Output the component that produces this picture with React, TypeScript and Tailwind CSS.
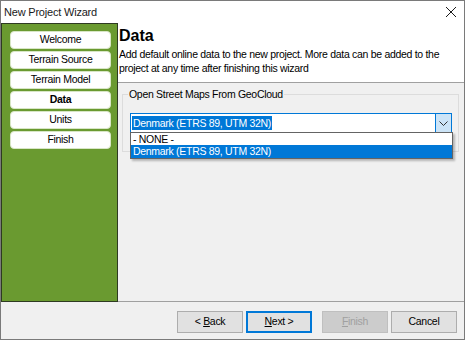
const steps = ["Welcome", "Terrain Source", "Terrain Model", "Data", "Units", "Finish"];
const current = "Data";

function WizardButton({
  label,
  hotkey,
  primary,
  disabled,
}: {
  label: [string, string, string];
  hotkey?: boolean;
  primary?: boolean;
  disabled?: boolean;
}) {
  const [before, key, after] = label;
  return (
    <div
      className={
        "w-[66px] h-[22px] flex items-center justify-center border " +
        (disabled
          ? "bg-[#cccccc] border-[#bfbfbf] text-[#a0a0a0]"
          : primary
          ? "bg-[#e1e1e1] border-[#0078d7] text-black shadow-[inset_0_0_0_1px_#0078d7]"
          : "bg-[#e1e1e1] border-[#adadad] text-black")
      }
    >
      <span>
        {before}
        <span className={hotkey ? "underline underline-offset-1" : ""}>{key}</span>
        {after}
      </span>
    </div>
  );
}

export default function App() {
  return (
    <div className="w-[465px] h-[340px] bg-[#f0f0f0] border border-[#7a7a7a] flex flex-col text-[10.5px] tracking-[-0.3px] text-black font-['Liberation_Sans',Arial,sans-serif] select-none">
      {/* title bar */}
      <div className="h-[22px] bg-white flex items-center justify-between pl-[3px] pr-[6px] shrink-0">
        <span className="text-[11px] tracking-[-0.2px] text-[#1a1a1a]">New Project Wizard</span>
        <svg width="12" height="12" viewBox="0 0 12 12" className="mr-[1px]">
          <path d="M1 1 L11 11 M11 1 L1 11" stroke="#1a1a1a" strokeWidth="1" />
        </svg>
      </div>

      {/* body */}
      <div className="flex h-[279px] shrink-0">
        <div className="w-[117px] bg-[#6a9a30] border border-[#2e3a22] flex flex-col gap-[2px] pt-[7px] pl-[8px] pr-[6px]">
          {steps.map((s) => (
            <div
              key={s}
              className={
                "h-[18px] bg-white rounded-[4px] border border-[#d8e6c6] flex items-center justify-center " +
                (s === current ? "font-bold" : "")
              }
            >
              {s}
            </div>
          ))}
        </div>

        <div className="flex-1 flex flex-col border-b border-[#a0a0a0]">
          <div className="h-[60px] bg-white border-b border-[#a0a0a0] pl-[1px] pt-[2px]">
            <div className="text-[16px] font-bold tracking-normal leading-[22px]">Data</div>
            <div className="leading-[14px] pr-[18px]">
              Add default online data to the new project. More data can be added to the project at any time after
              finishing this wizard
            </div>
          </div>

          <div className="px-[4px] pt-[5px]">
            <div className="relative border border-[#dcdcdc] h-[58px] mt-[6px] mr-[1px]">
              <span className="absolute -top-[8px] left-[5px] bg-[#f0f0f0] px-[1px] leading-[14px]">
                Open Street Maps From GeoCloud
              </span>

              <div className="relative mt-[18px] ml-[7px] mr-[6px] h-[20px] bg-white border border-[#0078d7] flex items-center">
                <span className="ml-[1px] bg-[#0078d7] text-white px-[1px] leading-[14px]">
                  Denmark (ETRS 89, UTM 32N)
                </span>
                <div className="ml-auto w-[16px] h-full bg-[#cce4f7] border-l border-[#0078d7] flex items-center justify-center">
                  <svg width="9" height="5" viewBox="0 0 9 5">
                    <path d="M0.5 0.5 L4.5 4.5 L8.5 0.5" fill="none" stroke="#333" strokeWidth="1" />
                  </svg>
                </div>

                {/* open dropdown list */}
                <div className="absolute left-[-1px] right-[-2px] top-[18px] bg-white border border-[#646464] shadow-[2px_2px_2px_rgba(0,0,0,0.25)] z-10">
                  <div className="h-[12px] leading-[12px] pl-[2px]">- NONE -</div>
                  <div className="h-[13px] leading-[13px] pl-[2px] bg-[#0078d7] text-white">Denmark (ETRS 89, UTM 32N)</div>
                </div>
              </div>
            </div>
          </div>
        </div>
      </div>

      {/* button bar */}
      <div className="flex-1 flex items-start justify-end pt-[9px] pr-[7px]">
        <WizardButton label={["< ", "B", "ack"]} hotkey />
        <div className="w-[3px]" />
        <WizardButton label={["", "N", "ext >"]} hotkey primary />
        <div className="w-[10px]" />
        <WizardButton label={["", "F", "inish"]} hotkey disabled />
        <div className="w-[3px]" />
        <WizardButton label={["", "Cancel", ""]} />
      </div>
    </div>
  );
}
